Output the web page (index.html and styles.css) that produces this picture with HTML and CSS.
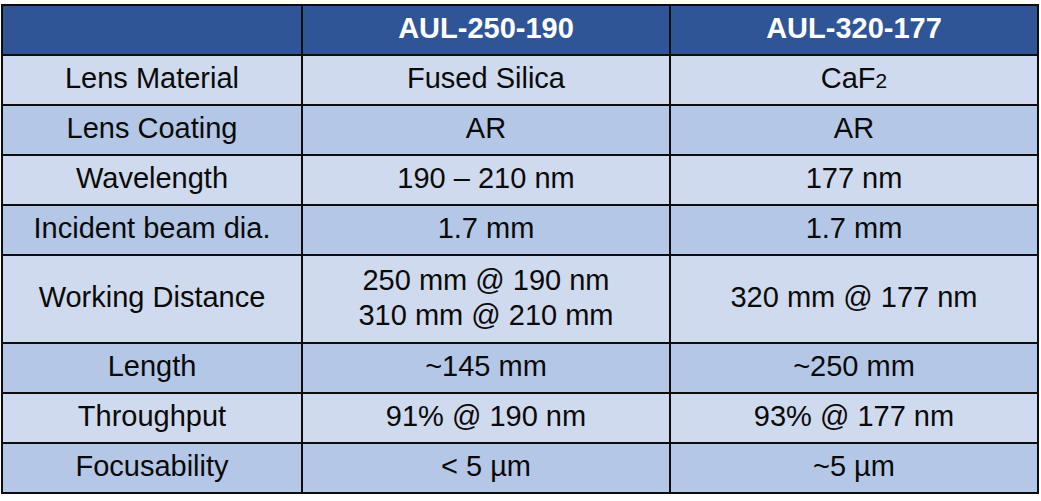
FILE: index.html
```html
<!DOCTYPE html>
<html>
<head>
<meta charset="utf-8">
<link rel="stylesheet" href="styles.css">
</head>
<body>
<table class="spec">
  <colgroup>
    <col class="c1"><col class="c2"><col class="c3">
  </colgroup>
  <tr class="head"><th></th><th>AUL-250-190</th><th>AUL-320-177</th></tr>
  <tr class="light"><td>Lens Material</td><td>Fused Silica</td><td>CaF<span class="sub">2</span></td></tr>
  <tr class="mid"><td>Lens Coating</td><td>AR</td><td>AR</td></tr>
  <tr class="light"><td>Wavelength</td><td>190 – 210 nm</td><td>177 nm</td></tr>
  <tr class="mid"><td>Incident beam dia.</td><td>1.7 mm</td><td>1.7 mm</td></tr>
  <tr class="light tall"><td>Working Distance</td><td>250 mm @ 190 nm<br>310 mm @ 210 mm</td><td>320 mm @ 177 nm</td></tr>
  <tr class="mid"><td>Length</td><td>~145 mm</td><td>~250 mm</td></tr>
  <tr class="light"><td>Throughput</td><td>91% @ 190 nm</td><td>93% @ 177 nm</td></tr>
  <tr class="mid"><td>Focusability</td><td>&lt; 5 µm</td><td>~5 µm</td></tr>
</table>
</body>
</html>
```
FILE: styles.css
```css
html, body {
  margin: 0;
  padding: 0;
  background: #ffffff;
}
body {
  padding: 4px 0 0 1px;
  font-family: "Liberation Sans", Arial, sans-serif;
}
.spec {
  border-collapse: collapse;
  width: 1038px;
  table-layout: fixed;
  font-size: 29px;
  line-height: 1.2;
  color: #0a0a0a;
}
.c1 { width: 300px; }
.c2 { width: 368px; }
.c3 { width: 368px; }
.spec th, .spec td {
  border: 2px solid #0d0d0d;
  text-align: center;
  vertical-align: middle;
  padding: 0 0 3px 0;
  height: 45px;
}
.head th {
  background: #2f5597;
  color: #ffffff;
  font-weight: bold;
}
.light td { background: #cfdaee; }
.mid td { background: #b4c7e7; }
.tall td { height: 83px; }
.sub { font-size: 0.72em; }
```
